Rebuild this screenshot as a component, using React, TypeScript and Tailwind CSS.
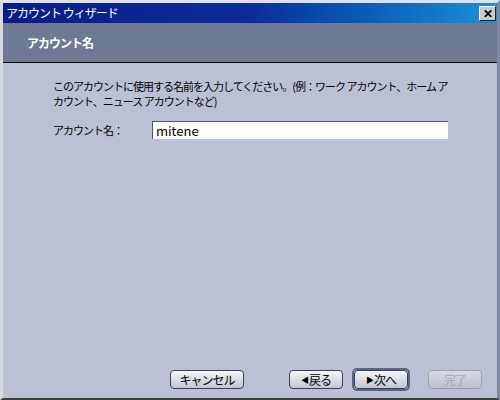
const jp = { fontFamily: '"Noto Sans CJK JP", "Noto Sans", sans-serif' };

function WizardButton({
  label,
  arrow,
  primary,
  disabled,
  width,
}: {
  label: string;
  arrow?: "left" | "right";
  primary?: boolean;
  disabled?: boolean;
  width: string;
}) {
  const body = (
    <div
      className={`flex h-[19px] shrink-0 ${width} items-center justify-center gap-[1px] whitespace-nowrap rounded-[4px] border text-[12px] leading-none tracking-[-1px] ${
        disabled
          ? "border-[#9aa0ae] bg-gradient-to-b from-[#d8dae2] to-[#bcc0cc] text-[#a0a6b4]"
          : "border-[#3c4150] bg-gradient-to-b from-[#f6f6fa] to-[#c2c6d2] text-black"
      }`}
    >
      {arrow === "left" && <span className="text-[8px]">◀</span>}
      {arrow === "right" && <span className="text-[8px]">▶</span>}
      <span>{label}</span>
    </div>
  );
  // default button gets a darker ring around it
  if (primary) {
    return <div className="shrink-0 rounded-[5px] border-[2px] border-[#5a6684]">{body}</div>;
  }
  return body;
}

export default function App() {
  return (
    <div
      className="flex h-[400px] w-[500px] flex-col border-b-[2px] border-l-[3px] border-r-[3px] border-t-[3px] border-b-[#404040] border-l-[#d8d8e0] border-r-[#8088a0] border-t-[#e0e0e8] bg-[#bbc0d4]"
      style={jp}
    >
      {/* title bar */}
      <div className="flex h-[20px] items-center justify-between bg-gradient-to-r from-[#0a1c86] via-[#0c2c9c] to-[#1e90d8] pl-[3px] pr-[1px]">
        <span className="whitespace-nowrap text-[12px] leading-none tracking-[-1px] text-white">
          アカウント ウィザード
        </span>
        <div className="flex h-[15px] w-[17px] items-center justify-center border border-b-[#202020] border-l-white border-r-[#202020] border-t-white bg-[#c8cad4] text-[12px] font-bold leading-none text-black">
          ✕
        </div>
      </div>

      {/* header */}
      <div className="flex h-[40px] items-center border-b border-black bg-[#6e7993] pl-[24px]">
        <span className="whitespace-nowrap text-[12px] font-bold tracking-[-1px] text-white">
          アカウント名
        </span>
      </div>

      {/* body */}
      <div className="flex flex-1 flex-col pl-[50px] pr-[20px] pt-[16px]">
        <p className="whitespace-pre text-[11px] leading-[15px] tracking-[-1px] text-black">
          {"このアカウントに使用する名前を入力してください。(例：ワーク アカウント、ホーム ア\nカウント、ニュース アカウントなど)"}
        </p>
        <div className="mt-[12px] flex items-center">
          <span className="w-[99px] shrink-0 whitespace-nowrap text-[11px] tracking-[-1px] text-black">
            アカウント名：
          </span>
          <div className="flex h-[18px] w-[296px] shrink-0 items-center border-l border-t border-[#505868] bg-white pl-[3px] text-[13px] text-black">
            mitene
          </div>
        </div>

        <div className="mt-auto mb-[7px] flex items-center pl-[117px]">
          <WizardButton label="キャンセル" width="w-[74px]" />
          <div className="ml-[45px]">
            <WizardButton label="戻る" arrow="left" width="w-[54px]" />
          </div>
          <div className="ml-[9px]">
            <WizardButton label="次へ" arrow="right" primary width="w-[54px]" />
          </div>
          <div className="ml-[18px]">
            <WizardButton label="完了" disabled width="w-[54px]" />
          </div>
        </div>
      </div>
    </div>
  );
}
